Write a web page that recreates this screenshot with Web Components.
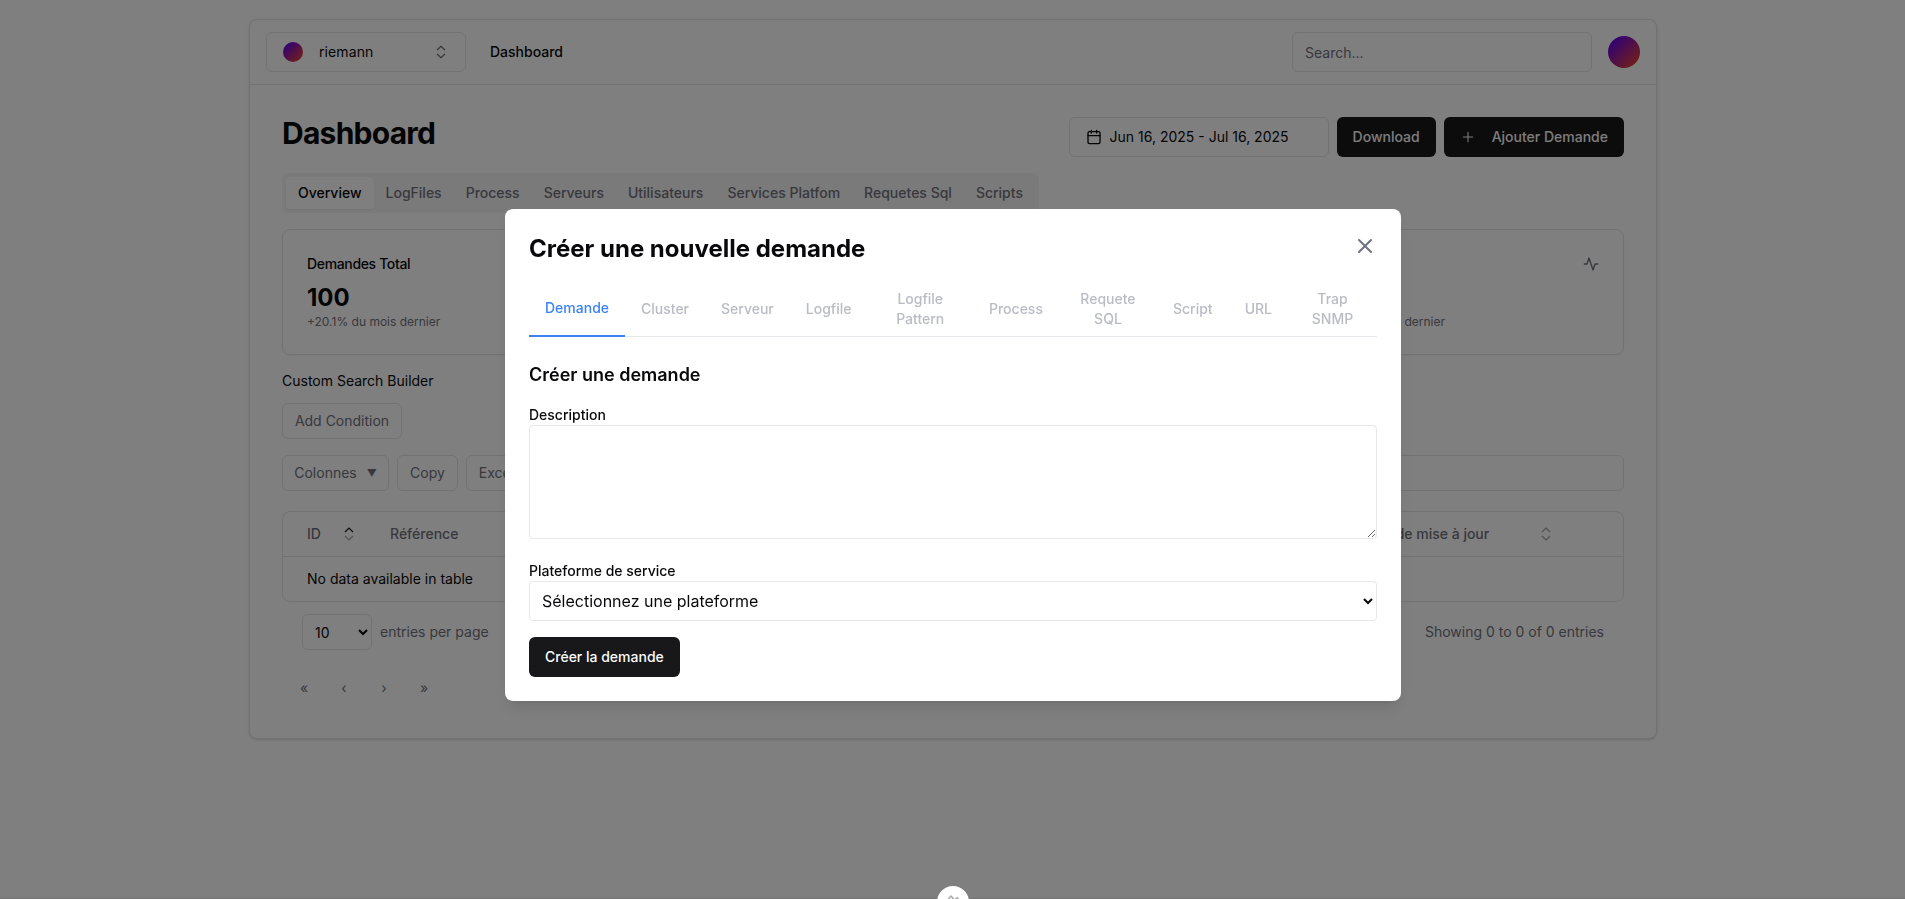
<!DOCTYPE html>
<html lang="fr">
<head>
<meta charset="utf-8">
<title>Dashboard</title>
<style>
html,body{margin:0;height:100%;overflow:hidden}
body{font:14px/20px Inter,sans-serif;color:#09090b;background:#fff}
</style>
</head>
<body>
<dash-app></dash-app>
<script>
const define = (name, html) => {
  const t = document.createElement('template');
  t.innerHTML = '<style>*{box-sizing:border-box}:host{box-sizing:border-box}</style>' + html;
  customElements.define(name, class extends HTMLElement {
    constructor() {
      super();
      this.attachShadow({ mode: 'open' }).appendChild(t.content.cloneNode(true));
    }
  });
};

define('ui-button', `
<style>
:host{display:inline-flex;align-items:center;justify-content:center;height:40px;padding:0 16px;border-radius:6px;background:#18181b;color:#fafafa;font-weight:500;white-space:nowrap;flex:none}
:host([variant=outline]){background:#fff;color:#09090b;border:1px solid #e4e4e7;font-weight:400;justify-content:flex-start}
:host([variant=tool]){background:#fff;color:#71717a;border:1px solid #e4e4e7;font-weight:400;height:36px;padding:0 12px}
</style><slot></slot>`);

define('sort-arrows', `
<style>:host{display:block;width:10px;height:14px;color:#a1a1aa}:host([asc]){--up:#18181b}svg{display:block}</style>
<svg width="10" height="14" viewBox="0 0 10 14" fill="none" stroke="currentColor" stroke-width="1.2"><path style="stroke:var(--up,currentColor)" d="M1 5 5 1l4 4"/><path d="M1 9l4 4 4-4"/></svg>`);

define('gradient-avatar', `
<style>:host{display:block;flex:none;width:32px;height:32px;border-radius:50%;background:linear-gradient(135deg,#5b00f5 8%,#e8402a 92%)}:host([small]){width:20px;height:20px}</style>`);

define('top-bar', `
<style>
:host{display:flex;align-items:center;height:65px;padding:0 16px;border-bottom:1px solid #e4e4e7}
.team{display:flex;align-items:center;width:200px;height:40px;border:1px solid #e4e4e7;border-radius:6px;padding:0 19px 0 16px;font-weight:400}
.team span{margin-left:16px;flex:1;letter-spacing:.1px}
.nav{margin-left:24px;font-weight:500;flex:1}
input{width:300px;height:40px;border:1px solid #e4e4e7;border-radius:6px;padding:1px 12px 0;font:inherit;background:#fff;margin-right:16px}
input::placeholder{color:#71717a;opacity:1}
</style>
<div class="team"><gradient-avatar small></gradient-avatar><span>riemann</span>
<svg width="10" height="14" viewBox="0 0 10 14" fill="none" stroke="#71717a" stroke-width="1.3"><path d="M1 5 5 1.3 9 5M1 9l4 3.7L9 9"/></svg></div>
<div class="nav">Dashboard</div>
<input placeholder="Search...">
<gradient-avatar></gradient-avatar>`);

define('nav-tabs', `
<style>:host{display:flex;width:max-content;height:40px;padding:4px;background:#f4f4f5;border-radius:6px}</style><slot></slot>`);
define('nav-tab', `
<style>:host{display:block;padding:6px 12px;font-weight:500;color:#71717a;border-radius:4px}:host([active]){background:#fff;color:#09090b;box-shadow:0 1px 2px rgba(0,0,0,.06)}</style><slot></slot>`);

define('stat-card', `
<style>
:host{display:block;height:126px;padding:24px;border:1px solid #e4e4e7;border-radius:8px;box-shadow:0 1px 2px rgba(0,0,0,.05)}
.t{display:flex;justify-content:space-between;font-weight:500;letter-spacing:-.35px;height:20px;margin-bottom:8px}
.n{font-size:24px;line-height:32px;font-weight:700}
.s{font-size:12px;line-height:16px;color:#71717a;width:max-content;min-width:119.5px;text-align:right}
svg{margin-top:2px}
</style>
<div class="t"><slot name="title"></slot><svg width="16" height="16" viewBox="0 0 24 24" fill="none" stroke="#71717a" stroke-width="2" stroke-linecap="round" stroke-linejoin="round"><path d="M22 12h-4l-3 9L9 3l-3 9H2"/></svg></div>
<div class="n"><slot name="value"></slot></div><div class="s"><slot></slot></div>`);

define('data-table', `
<style>
:host{display:block}
.label{height:20px}
.tools{display:flex;gap:8px;margin:16px 0 20px}
.search{flex:1;height:36px;border:1px solid #e4e4e7;border-radius:6px}
.table{border:1px solid #e4e4e7;border-radius:8px;height:91px}
.head{display:flex;align-items:center;height:45px;border-bottom:1px solid #e4e4e7;color:#71717a;font-weight:500}
.head div{display:flex;align-items:center;justify-content:space-between;padding-left:24px;white-space:nowrap}
.row{padding:12px 24px}
.foot{display:flex;align-items:center;margin-top:12px;padding:0 20px;color:#71717a;height:36px}
.foot select{width:70px;height:36px;border:1px solid #e4e4e7;border-radius:6px;background:#fff;font:inherit;color:#09090b;padding:0 8px;margin-right:8px}
.foot b{font-weight:400;margin-left:auto}
.pages{display:flex;margin:21px 0 0 2px}
.pages span{width:40px;height:36px;line-height:34px;text-align:center;color:#71717a}
</style>
<div class="label">Custom Search Builder</div>
<ui-button variant="tool" style="width:120px;margin-top:12px">Add Condition</ui-button>
<div class="tools">
<ui-button variant="tool" style="width:107px">Colonnes&nbsp;<span style="margin-left:6px;font-size:10px">▼</span></ui-button>
<ui-button variant="tool" style="width:61px">Copy</ui-button>
<ui-button variant="tool" style="width:61px">Excel</ui-button>
<div class="search"></div></div>
<div class="table">
<div class="head">
<div style="width:71px">ID<sort-arrows asc></sort-arrows></div>
<div style="width:151px;margin-left:12px">Référence<sort-arrows></sort-arrows></div>
<div style="margin-left:auto;width:214px;margin-right:72px">Date de mise à jour<sort-arrows></sort-arrows></div>
</div>
<div class="row">No data available in table</div>
</div>
<div class="foot"><select><option>10</option></select>entries per page<b>Showing 0 to 0 of 0 entries</b></div>
<div class="pages"><span>«</span><span>‹</span><span>›</span><span>»</span></div>`);

define('dash-page', `
<style>
:host{display:block;width:1408px;height:720px;margin:19px auto 0;border:1px solid #e4e4e7;border-radius:8px;background:#fff;box-shadow:0 1px 3px rgba(0,0,0,.12),0 1px 2px -1px rgba(0,0,0,.1)}
main{padding:24px 32px}
.bar{display:flex;align-items:center;height:48px;margin-bottom:16px}
h2{margin:0;flex:1;font-size:30px;line-height:36px;font-weight:700;letter-spacing:-.75px}
.acts{display:flex;gap:8px;padding-top:8px}
.cards{display:grid;grid-template-columns:repeat(4,1fr);gap:16px;margin:16px 0}
</style>
<top-bar></top-bar>
<main>
<div class="bar"><h2>Dashboard</h2><div class="acts">
<ui-button variant="outline" style="width:260px"><svg style="margin-right:8px" width="16" height="16" viewBox="0 0 24 24" fill="none" stroke="currentColor" stroke-width="2" stroke-linecap="round" stroke-linejoin="round"><path d="M8 2v4M16 2v4"/><rect width="18" height="18" x="3" y="4" rx="2"/><path d="M3 10h18"/></svg>Jun 16, 2025 - Jul 16, 2025</ui-button>
<ui-button>Download</ui-button>
<ui-button><svg style="margin-right:16px" width="16" height="16" viewBox="0 0 24 24" fill="none" stroke="currentColor" stroke-width="1.6" stroke-linecap="round"><path d="M5 12h14M12 5v14"/></svg>Ajouter Demande</ui-button>
</div></div>
<nav-tabs><nav-tab active>Overview</nav-tab><nav-tab>LogFiles</nav-tab><nav-tab>Process</nav-tab><nav-tab>Serveurs</nav-tab><nav-tab>Utilisateurs</nav-tab><nav-tab>Services Platfom</nav-tab><nav-tab>Requetes Sql</nav-tab><nav-tab>Scripts</nav-tab></nav-tabs>
<div class="cards">
<stat-card><span slot="title">Demandes Total</span><span slot="value">100</span>+20.1% du mois dernier</stat-card>
<stat-card></stat-card><stat-card></stat-card>
<stat-card><span slot="title"></span><span slot="value">&nbsp;</span>mois dernier</stat-card>
</div>
<data-table></data-table>
</main>`);

define('step-tab', `
<style>:host{display:flex;align-items:center;justify-content:center;text-align:center;height:56px;padding:0 16px;font-weight:500;color:#b9bcc4;flex:none;margin-bottom:-1px}:host([active]){color:#3b82f6;border-bottom:2px solid #3b82f6}</style><slot></slot>`);

define('request-dialog', `
<style>
:host{display:block;width:896px;height:492px;padding:24px;background:#fff;border-radius:8px;box-shadow:0 10px 15px -3px rgba(0,0,0,.1),0 4px 6px -4px rgba(0,0,0,.1)}
header{display:flex;justify-content:space-between;height:32px;margin-bottom:16px}
header svg{margin-top:1px}
h2{margin:0;font-size:24px;line-height:32px;font-weight:700}
nav{display:flex;height:56px;border-bottom:1px solid #e5e7eb}
h3{margin:24px 0 16px;font-size:18px;line-height:28px;font-weight:600}
label{display:block;height:20px;font-weight:500}
textarea{display:block;width:100%;height:114px;border:1px solid #e5e7eb;border-radius:4px;margin-bottom:22px;background:#fff}
select{display:block;width:100%;height:40px;border:1px solid #e5e7eb;border-radius:4px;padding:0 8px;font:16px/24px Inter,sans-serif;color:#09090b;background:#fff;margin-bottom:16px}
</style>
<header><h2>Créer une nouvelle demande</h2><svg width="24" height="24" viewBox="0 0 24 24" fill="none" stroke="#6b7280" stroke-width="2" stroke-linecap="round"><path d="M6 18 18 6M6 6l12 12"/></svg></header>
<nav><step-tab active>Demande</step-tab><step-tab>Cluster</step-tab><step-tab>Serveur</step-tab><step-tab>Logfile</step-tab><step-tab style="width:105.5px">Logfile<br>Pattern</step-tab><step-tab>Process</step-tab><step-tab style="width:98px">Requete<br>SQL</step-tab><step-tab>Script</step-tab><step-tab>URL</step-tab><step-tab style="flex:1">Trap<br>SNMP</step-tab></nav>
<h3>Créer une demande</h3>
<label>Description</label><textarea></textarea>
<label>Plateforme de service</label><select><option>Sélectionnez une plateforme</option></select>
<ui-button>Créer la demande</ui-button>`);

define('dash-app', `
<style>
:host{display:flow-root;height:100vh;padding-left:1px}
.overlay{position:fixed;inset:0;background:rgba(0,0,0,.5);display:flex;justify-content:center;align-items:flex-start;padding:209px 0 0 1px}
.line{position:fixed;left:0;right:0;bottom:0;height:1px;background:#747474}
.fab{position:fixed;left:937px;top:886px;width:32px;height:32px;border-radius:50%;background:#fff}
.fab svg{display:block;margin:8px}
</style>
<dash-page></dash-page>
<div class="overlay"><request-dialog></request-dialog></div>
<div class="line"></div>
<div class="fab"><svg width="16" height="16" viewBox="0 0 16 16" fill="none" stroke="#aaa" stroke-width="1.5" stroke-linecap="round" stroke-linejoin="round"><path d="M3 5.5 6 2l3 3.5M10.5 5 12 3.7l1.3 1.3"/></svg></div>`);
</script>
</body>
</html>
